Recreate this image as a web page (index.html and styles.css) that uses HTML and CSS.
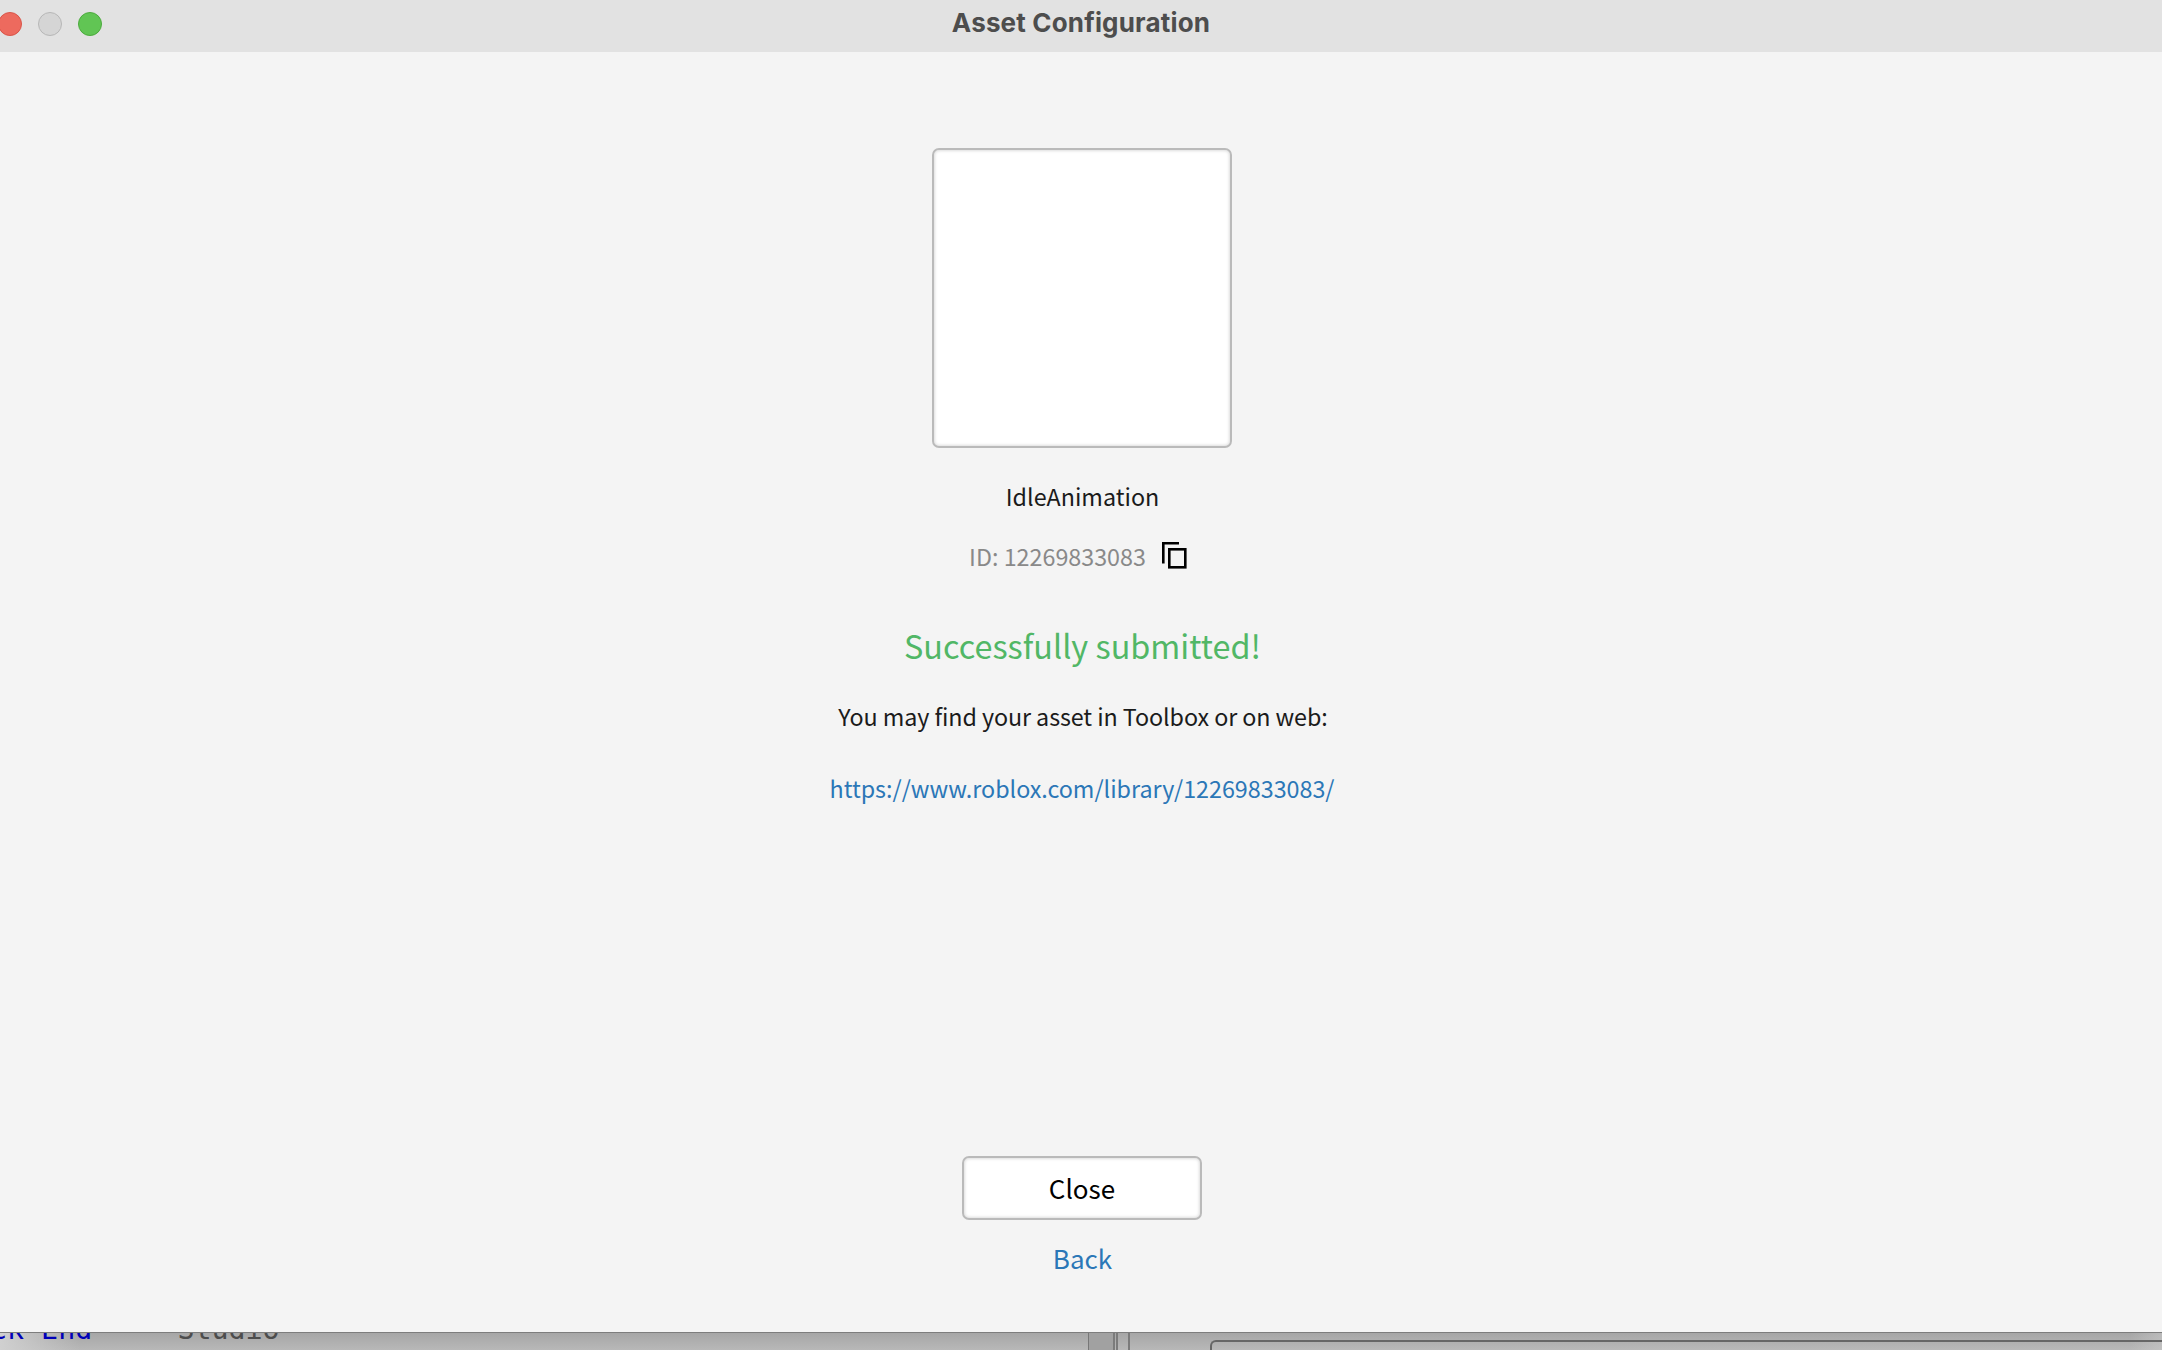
FILE: index.html
```html
<!DOCTYPE html>
<html lang="en">
<head>
<meta charset="utf-8">
<title>Asset Configuration</title>
<link rel="stylesheet" href="styles.css">
</head>
<body>
<main class="window">
  <header class="titlebar">
    <div class="lights"><span class="light red"></span><span class="light gray"></span><span class="light green"></span></div>
    <h1 class="title">Asset Configuration</h1>
  </header>
  <section class="content">
    <div class="thumbnail"></div>
    <p class="line name"><span>IdleAnimation</span></p>
    <p class="line id"><span>ID: 12269833083</span>
      <svg class="copy" width="26" height="28" viewBox="0 0 26 28" fill="none" stroke="#000" stroke-width="2.6"><path d="M2.3 22.5V2.3H18"/><rect x="8.3" y="8.3" width="16" height="18"/></svg>
    </p>
    <h2 class="success"><span>Successfully submitted!</span></h2>
    <p class="line hint"><span>You may find your asset in Toolbox or on web:</span></p>
    <a class="line link"><span>https://www.roblox.com/library/12269833083/</span></a>
    <button class="close"><span>Close</span></button>
    <a class="back"><span>Back</span></a>
  </section>
</main>
<div class="editor">
  <div class="output"><b class="keyword">ck End</b>  -  Studio</div>
  <div class="scroll"></div>
  <div class="splitter"></div>
  <div class="panel"><div class="field"></div></div>
</div>
</body>
</html>
```
FILE: styles.css
```css
* { box-sizing: border-box; }
body {
  margin: 0;
  width: 2162px;
  height: 1350px;
  overflow: hidden;
  display: flex;
  flex-direction: column;
  background: #b2b2b2;
  font-family: "Noto Sans CJK SC", sans-serif;
}
h1, h2, p { margin: 0; font-weight: 400; }
.window { height: 1332px; flex: none; background: #f4f4f4; }
.titlebar {
  display: grid;
  grid-template-columns: 102px 1fr 102px;
  height: 52px;
  background: #e2e2e2;
}
.lights { display: flex; gap: 16px; margin: 12px 0 0 -2px; }
.light { width: 24px; height: 24px; border-radius: 50%; border: 1px solid; flex: none; }
.red { background: #ed6a5e; border-color: #d95549; }
.gray { background: #d5d5d5; border-color: #b7b7b7; }
.green { background: #61c554; border-color: #4cab3d; }
.title {
  text-align: center;
  font: 700 26px/46px Inter, sans-serif;
  letter-spacing: 0.17px;
  color: #4d4d4d;
}
.content {
  display: flex;
  flex-direction: column;
  align-items: center;
  padding: 96px 0 0 2px;
}
.thumbnail, .close {
  background: #fff;
  border: 2px solid #bababa;
  border-radius: 7px;
  box-shadow: inset 0 0 3px 1px #ddd;
}
.thumbnail { width: 300px; height: 300px; }
.line { height: 40px; font-size: 23.3px; line-height: 40px; white-space: nowrap; color: #1b1b1b; }
.name { margin-top: 28px; padding-left: 1px; }
.id { display: flex; margin-top: 20px; padding-right: 8px; color: #898989; }
.copy { margin: 5px 0 0 15px; }
.success { height: 48px; margin-top: 45px; padding-left: 1px; font-size: 32.4px; line-height: 48px; color: #51b766; }
.hint { margin-top: 27px; padding-left: 2px; letter-spacing: -0.08px; }
.link { margin-top: 32px; }
.link, .back { color: #2b77b7; }
.close {
  width: 240px;
  height: 64px;
  margin-top: 348px;
  padding: 0;
  font: 26px/60px "Noto Sans CJK SC", sans-serif;
  color: #000;
}
.back { margin-top: 18px; padding-left: 1px; font-size: 26px; line-height: 40px; }
.editor {
  display: flex;
  height: 18px;
  flex: none;
  overflow: hidden;
  border-top: 1px solid #7d7d7d;
  background: linear-gradient(90deg, transparent 2130px, #cccccc80), linear-gradient(#a6a6a6, #b8b8b8);
}
.output {
  width: 1088px;
  height: 20px;
  margin-top: -3px;
  text-indent: -10px;
  white-space: pre;
  font: 28.3px/0 "DejaVu Sans Mono", monospace;
  color: #4d4d4d;
  background: linear-gradient(90deg, #d0d0d0, transparent 80px);
}
.keyword { font-weight: 400; color: #0000b8; }
.scroll { width: 25px; background: #a1a1a1; border-left: 1px solid #777; }
.splitter { width: 17px; border-left: 2px solid #7b7b7b; background: linear-gradient(90deg, transparent 1px, #7b7b7b 1px 3px, transparent 3px 13px, #7b7b7b 13px 15px); }
.panel { flex: 1; padding: 7px 0 0 80px; }
.field { height: 20px; border: 2px solid #666; border-right: 0; border-radius: 6px 0 0 0; }
```
